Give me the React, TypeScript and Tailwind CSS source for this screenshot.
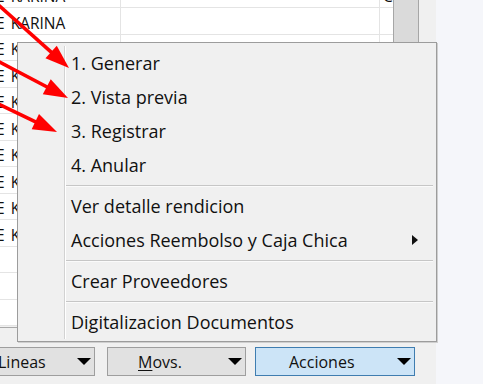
import type { FC, ReactNode } from "react";

type ArrowProps = { x1: number; y1: number; x2: number; y2: number };

const RedArrow: FC<ArrowProps> = ({ x1, y1, x2, y2 }) => {
  const dx = x2 - x1;
  const dy = y2 - y1;
  const len = Math.hypot(dx, dy);
  const ux = dx / len;
  const uy = dy / len;
  const headLen = 24;
  const headW = 8.5;
  const bx = x2 - ux * headLen;
  const by = y2 - uy * headLen;
  const pts = `${x2},${y2} ${bx - uy * headW},${by + ux * headW} ${bx + uy * headW},${by - ux * headW}`;
  return (
    <g>
      <line x1={x1} y1={y1} x2={bx + ux * 2} y2={by + uy * 2} stroke="#ff0000" strokeWidth={3.6} />
      <polygon points={pts} fill="#ff0000" />
    </g>
  );
};

const DownTriangle = () => (
  <svg width="14" height="7" viewBox="0 0 14 7">
    <polygon points="0,0 14,0 7,7" fill="#000" />
  </svg>
);

type MenuEntry = { label?: string; sub?: boolean; sep?: boolean };

const entries: MenuEntry[] = [
  { label: "1. Generar" },
  { label: "2. Vista previa" },
  { label: "3. Registrar" },
  { label: "4. Anular" },
  { sep: true },
  { label: "Ver detalle rendicion" },
  { label: "Acciones Reembolso y Caja Chica", sub: true },
  { sep: true },
  { label: "Crear Proveedores" },
  { sep: true },
  { label: "Digitalizacion Documentos" },
];

const GridRow: FC<{ named?: boolean; third?: string }> = ({ named, third }) => (
  <div className="flex h-[26.5px] shrink-0 border-b border-[#e4e4e4] bg-white">
    <div className="w-[121px] border-r border-[#e4e4e4] overflow-hidden whitespace-nowrap flex items-center pt-[5px]">
      {named && (
        <>
          <span className="-ml-[4px]">E</span>
          <span className="ml-[6px]">KARINA</span>
        </>
      )}
    </div>
    <div className="w-[259px] border-r border-[#e4e4e4]" />
    <div className="w-[13px] overflow-hidden whitespace-nowrap flex items-center pt-[5px] pl-[3px]">
      {third}
    </div>
  </div>
);

const DropButton: FC<{ children: ReactNode; className: string; textPad: string }> = ({
  children,
  className,
  textPad,
}) => (
  <div className={`h-[29px] flex items-center border ${className}`}>
    <span className={`${textPad} whitespace-nowrap`}>{children}</span>
    <span className="ml-auto mr-[3px] flex">
      <DownTriangle />
    </span>
  </div>
);

export default function App() {
  const rows = Array.from({ length: 13 }, (_, i) => i);
  return (
    <div className="relative w-[483px] h-[384px] overflow-hidden bg-[#f5f6fa] font-['Open_Sans','Noto_Sans',sans-serif] text-[#111]">
      <div className="w-[436px] h-full flex flex-col bg-[#f0f0f0]">
        {/* grid */}
        <div className="h-[328px] shrink-0 flex border-b border-[#a9a9a9] overflow-hidden">
          <div className="w-[393px] flex flex-col -mt-[18.5px] text-[15.5px]">
            {rows.map((i) => (
              <GridRow key={i} named={i < 10} third={i === 0 ? "C" : undefined} />
            ))}
          </div>
          <div className="w-[26px] h-full bg-[#dadada] border-x border-[#a6a6a6]" />
        </div>
        {/* bottom buttons */}
        <div className="flex pt-[19px] text-[16px]">
          <DropButton className="w-[111px] -ml-[16px] bg-[#e1e1e1] border-[#9e9e9e]" textPad="pl-[13px]">
            Lineas
          </DropButton>
          <DropButton className="w-[139px] ml-[12px] bg-[#e1e1e1] border-[#9e9e9e]" textPad="pl-[30px]">
            <span className="underline underline-offset-2">M</span>ovs.
          </DropButton>
          <DropButton className="w-[160px] ml-[9px] bg-[#cce4f7] border-[#3f7db0]" textPad="pl-[33px]">
            Acciones
          </DropButton>
        </div>
      </div>

      {/* context menu */}
      <div className="absolute left-[17px] top-[42px] w-[420px] border border-[#9c9c9c] bg-[#f0f0f0] p-[3px] pb-[2px] shadow-[1px_1px_0_#cfcfcf] text-[18px]">
        <div className="flex">
          <div className="w-[44px] shrink-0 border-r border-[#d2d2d2]" />
          <div className="flex-1 flex flex-col border-l border-white">
            {entries.map((e, i) =>
              e.sep ? (
                <div key={i} className="h-[7px] pt-[3px]">
                  <div className="h-px bg-[#c6c6c6]" />
                  <div className="h-px bg-[#fafafa]" />
                </div>
              ) : (
                <div key={i} className="h-[34px] flex items-center pl-[5px] pr-[15px]">
                  <span className="whitespace-nowrap">{e.label}</span>
                  {e.sub && (
                    <svg className="ml-auto" width="6" height="10" viewBox="0 0 6 10">
                      <polygon points="0,0 6,5 0,10" fill="#111" />
                    </svg>
                  )}
                </div>
              )
            )}
          </div>
        </div>
      </div>

      {/* red annotation arrows */}
      <svg className="absolute inset-0 pointer-events-none" width="483" height="384">
        <RedArrow x1={-6} y1={1} x2={69} y2={68} />
        <RedArrow x1={-6} y1={59} x2={68} y2={98} />
        <RedArrow x1={-6} y1={102} x2={57} y2={132} />
      </svg>
    </div>
  );
}
